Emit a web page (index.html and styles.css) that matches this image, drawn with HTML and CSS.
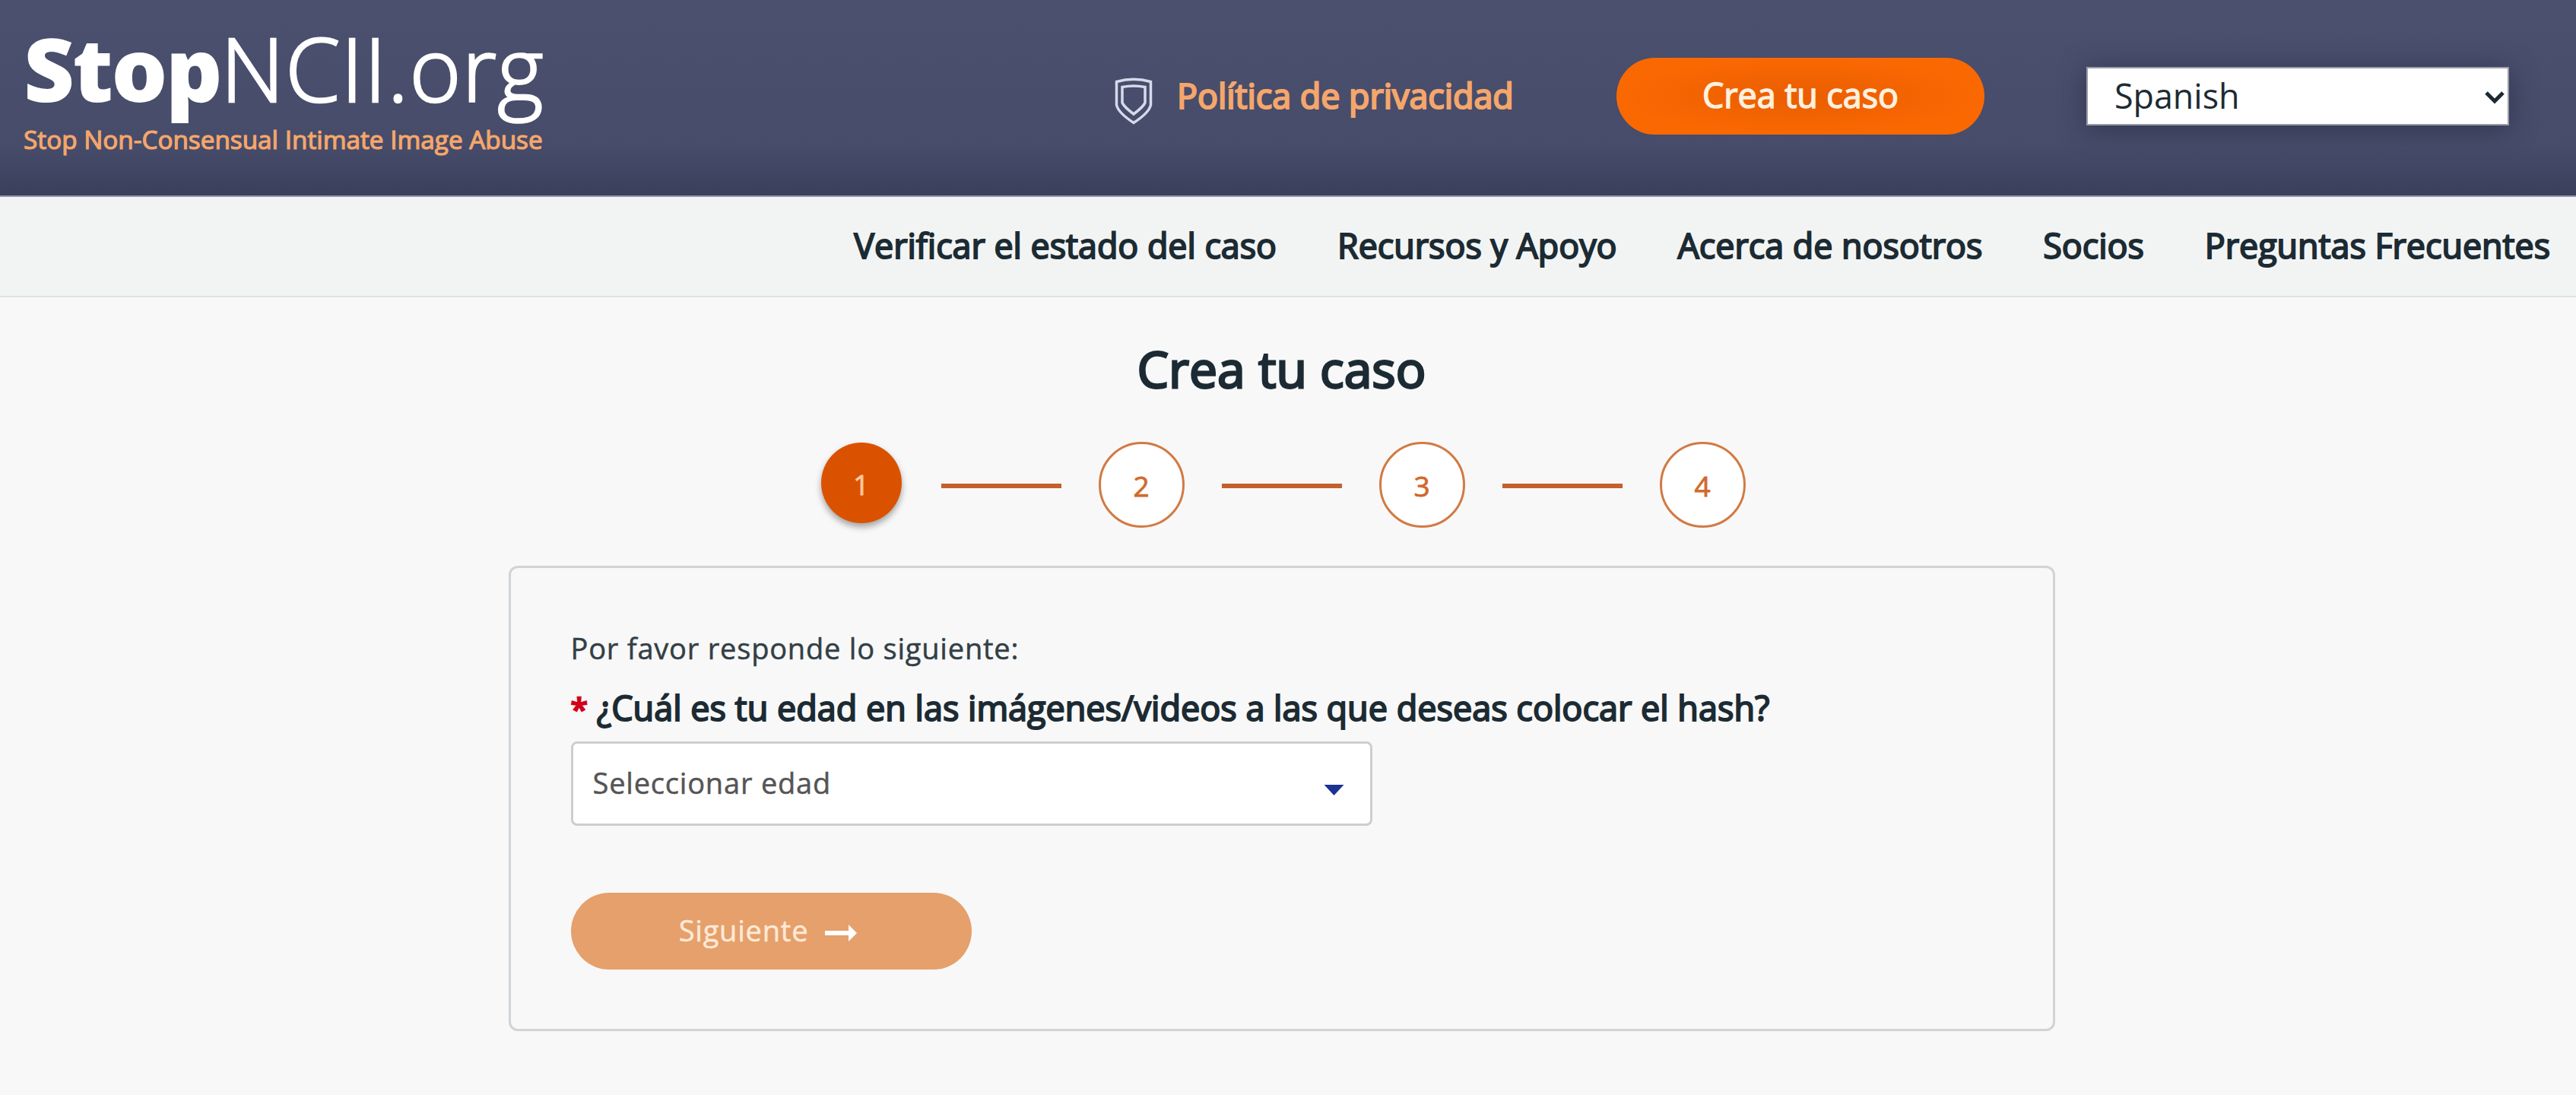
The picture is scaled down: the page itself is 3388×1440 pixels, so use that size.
FILE: index.html
```html
<!DOCTYPE html>
<html lang="es">
<head>
    <meta charset="UTF-8">
    <meta name="viewport" content="width=device-width, initial-scale=1.0">
    <title>StopNCII.org - Crea tu caso</title>
    <link rel="stylesheet" href="styles.css">
</head>
<body>
    <!-- Header -->
    <header class="header">
        <a class="logo" href="#">
            <div class="logo-name"><span class="logo-stop">Stop</span><span class="logo-ncii">NCII.org</span></div>
            <div class="logo-tagline">Stop Non-Consensual Intimate Image Abuse</div>
        </a>

        <a class="privacy" href="#">
            <svg class="shield" viewBox="0 0 50 62">
                <path d="M2.5 5.5C17 1.2 33 1.2 47.5 5.5V36C46 43 38 51 25 59.5C12 51 4 43 2.5 36Z"/>
                <path d="M10 12.5C20 10.5 30 10.5 40 12.5V33C38 38 33 42 25 48C17 42 12 38 10 33Z"/>
            </svg>
            <span>Política de privacidad</span>
        </a>

        <a class="create-button" href="#">Crea tu caso</a>

        <div class="language">
            <span>Spanish</span>
            <svg class="chevron" viewBox="0 0 28 18">
                <path d="M3 3L14 14L25 3"/>
            </svg>
        </div>
    </header>

    <!-- Navigation -->
    <nav class="nav">
        <a href="#">Verificar el estado del caso</a>
        <a href="#">Recursos y Apoyo</a>
        <a href="#">Acerca de nosotros</a>
        <a href="#">Socios</a>
        <a href="#">Preguntas Frecuentes</a>
    </nav>

    <!-- Case form -->
    <main class="main">
        <h1>Crea tu caso</h1>

        <div class="steps">
            <div class="step active">1</div>
            <div class="step-line"></div>
            <div class="step">2</div>
            <div class="step-line"></div>
            <div class="step">3</div>
            <div class="step-line"></div>
            <div class="step">4</div>
        </div>

        <div class="card">
            <p class="intro">Por favor responde lo siguiente:</p>
            <div class="question"><span class="required">*</span> ¿Cuál es tu edad en las imágenes/videos a las que deseas colocar el hash?</div>
            <div class="age-select">
                <span>Seleccionar edad</span>
                <span class="triangle"></span>
            </div>
            <div class="next-button">
                <span>Siguiente</span>
                <svg class="arrow" viewBox="0 0 42 22">
                    <path d="M0 8H31V0L42 11L31 22V14H0Z"/>
                </svg>
            </div>
        </div>
    </main>
</body>
</html>
```
FILE: styles.css
```css
/* Global Styles */
* {
    box-sizing: border-box;
}

body {
    margin: 0;
    background: #f8f8f8;
    color: #1c2b33;
    font-family: "Open Sans", sans-serif;
    font-size: 44.8px;
}

a {
    color: inherit;
    text-decoration: none;
}

/* Header */
.header {
    display: flex;
    align-items: flex-start;
    height: 259px;
    padding-left: 31px;
    background: linear-gradient(#4a506d 0, #464c69 190px, #3a405c 257px);
    border-bottom: 2px solid #9497ab;
}

.logo {
    width: 1436px;
    padding-top: 29px;
    color: #fff;
    white-space: nowrap;
}

.logo-name {
    font-size: 116px;
    line-height: 120px;
}

.logo-stop {
    font-weight: 800;
    letter-spacing: -2.4px;
}

.logo-ncii {
    font-weight: 300;
    letter-spacing: 1.3px;
    -webkit-text-stroke: 2.6px #fff;
}

.logo-tagline {
    margin-top: 14px;
    font-size: 33.3px;
    line-height: 40px;
    color: #f5a66c;
    -webkit-text-stroke: 1.2px #f5a66c;
}

/* Privacy link */
.privacy {
    display: flex;
    width: 659px;
    padding-top: 95px;
    line-height: 61px;
    color: #f5a66c;
    -webkit-text-stroke: 2.2px #f5a66c;
}

.shield {
    width: 50px;
    height: 62px;
    margin: 7px 32px 0 -1px;
    fill: none;
    stroke: #d5daec;
    stroke-width: 3.5;
}

.create-button {
    width: 484px;
    height: 101px;
    margin-top: 76px;
    border-radius: 51px;
    background: radial-gradient(closest-side, #e95e00, #fa6802);
    color: #fff0df;
    line-height: 98px;
    text-align: center;
    -webkit-text-stroke: 1.5px #fff0df;
}

.language {
    display: flex;
    justify-content: space-between;
    width: 556px;
    height: 77px;
    margin: 88px 0 0 134px;
    padding: 0 3px 0 35px;
    border: 2px solid #9a9da8;
    background: #fff;
    box-shadow: 0 4px 34px rgba(35, 40, 65, 0.6);
    line-height: 71px;
}

.chevron {
    width: 28px;
    height: 18px;
    margin-top: 29px;
    fill: none;
    stroke: #1c2b33;
    stroke-width: 5;
}

/* Navigation */
.nav {
    display: flex;
    justify-content: flex-end;
    gap: 80px;
    height: 132px;
    padding-right: 34px;
    background: #f2f4f4;
    border-bottom: 2px solid #e0e1e1;
    line-height: 127px;
    -webkit-text-stroke: 2px #1c2b33;
}

/* Main */
.main {
    display: flex;
    flex-direction: column;
    align-items: center;
    padding-right: 17px;
}

h1 {
    margin: 51px 0 0;
    font-size: 66px;
    font-weight: 400;
    line-height: 84px;
    -webkit-text-stroke: 2.8px #1c2b33;
}

/* Steps */
.steps {
    display: flex;
    align-items: center;
    gap: 49px;
    height: 114px;
    margin-top: 54px;
}

.step {
    width: 113px;
    height: 113px;
    border: 3px solid #d27a43;
    border-radius: 50%;
    background: #fff;
    color: #cf6a2c;
    font-size: 37px;
    line-height: 110px;
    text-align: center;
    -webkit-text-stroke: 0.8px;
}

.step.active {
    width: 106px;
    height: 106px;
    margin: 0 3px 5px 4px;
    border: none;
    background: #da5200;
    box-shadow: 0 5px 9px rgba(0, 0, 0, 0.35);
    color: #ffc9a0;
    line-height: 109px;
}

.step-line {
    width: 158px;
    height: 6px;
    margin-top: 4px;
    background: #c4602c;
}

/* Card */
.card {
    width: 2034px;
    height: 612px;
    margin-top: 50px;
    padding: 77px 79px;
    border: 3px solid #d0d3d7;
    border-radius: 12px;
}

.intro {
    margin: 0;
    font-size: 38px;
    line-height: 56px;
    letter-spacing: 0.8px;
    color: #333f46;
    -webkit-text-stroke: 0.5px;
}

.question {
    margin-top: 19px;
    font-size: 45px;
    line-height: 64px;
    -webkit-text-stroke: 2px #1c2b33;
}

.required {
    color: #d0021b;
    font-size: 41px;
    -webkit-text-stroke: 2.4px #d0021b;
}

.age-select {
    display: flex;
    justify-content: space-between;
    width: 1054px;
    height: 111px;
    margin-top: 11px;
    padding: 0 34px 0 26px;
    border: 3px solid #cbced2;
    border-radius: 8px;
    background: #fff;
    color: #555;
    font-size: 38px;
    line-height: 102px;
    letter-spacing: 0.8px;
    -webkit-text-stroke: 0.5px;
}

.triangle {
    width: 26px;
    height: 14px;
    margin-top: 54px;
    background: #1d3390;
    clip-path: polygon(0 0, 100% 0, 50% 100%);
}

.next-button {
    display: flex;
    justify-content: center;
    gap: 22px;
    width: 527px;
    height: 101px;
    margin-top: 88px;
    padding-right: 8px;
    border-radius: 51px;
    background: #e5a06c;
    color: #ffe9d6;
    font-size: 38px;
    line-height: 99px;
    letter-spacing: 0.8px;
    -webkit-text-stroke: 0.5px;
}

.arrow {
    width: 42px;
    height: 22px;
    margin-top: 42px;
    fill: #fff;
}
```
